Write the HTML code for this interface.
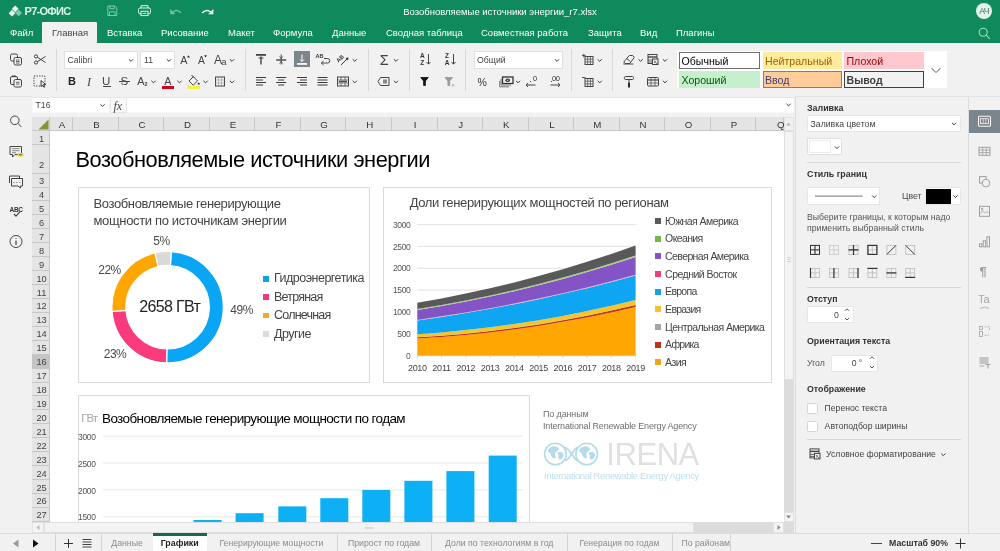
<!DOCTYPE html><html lang="ru"><head><meta charset="utf-8"><title>Р7-Офис</title><style>
*{box-sizing:border-box;margin:0;padding:0}
html,body{width:1000px;height:551px;overflow:hidden;background:#fff}
body{font-family:"Liberation Sans",sans-serif;font-size:11px;color:#444;position:relative;-webkit-font-smoothing:antialiased}
#root{position:absolute;left:0;top:0;width:1000px;height:551px;overflow:hidden;will-change:transform}
.a{position:absolute}
.t{position:absolute;white-space:nowrap;line-height:1}
svg{position:absolute;overflow:visible}
.hdr{left:0;top:0;width:1000px;height:44px;background:#0f8a5c}
.tab{color:#fff;font-size:11.5px;top:28px}
.tb{left:0;top:44px;width:1000px;height:52px;background:#f1f1f1}
.sep{width:1px;background:#d8d8d8;top:49px;height:42px}
.box{background:#fff;border:1px solid #e0e0e0;border-radius:1px}
.ch{font-family:"Liberation Sans",sans-serif;}
.rh{left:32px;width:18px;background:#e4e4e4;border-bottom:1px solid #c8c8c8;border-right:1px solid #c8c8c8;text-align:center;font-size:11px;color:#333;font-family:"Liberation Sans",sans-serif}
.colh{top:116px;height:15px;background:#e4e4e4;border-right:1px solid #c8c8c8;border-bottom:1px solid #c8c8c8;text-align:center;font-size:11px;line-height:15px;color:#333}
.lbl{font-weight:bold;color:#333;font-size:11px}
.st{font-size:11px;line-height:15px;padding-left:4px;height:17px;width:80px}
</style></head><body><div id="root">
<div class="a" style="left:0px;top:0px;width:1000px;height:43px;background:#0f8a5c;"></div>
<svg style="left:8px;top:4px" width="16" height="14" viewBox="8 4 16 14"><g fill="#e4f6ee"><rect x="12.800" y="6.400" width="4.800" height="4.800" transform="rotate(45 15.200 8.800)"/><rect x="9.600" y="10.800" width="4.800" height="4.800" transform="rotate(45 12 13.200)"/><rect x="16.200" y="10.500" width="4.800" height="4.800" transform="rotate(45 18.600 12.900)" opacity=".55"/></g></svg>
<div class="t" style="left:24.50px;top:6.4px;font-size:11px;color:#dff5ec;letter-spacing:-0.702px;font-weight:bold;">Р7-ОФИС</div>
<svg style="left:0;top:0" width="230" height="22" viewBox="0 0 230 22" fill="none" stroke-width="1"><g stroke="#7ccbab"><path d="M107.800 6h7.300l1.700 1.700v7.800h-9z"/><path d="M110 6v2.800h4.200v-2.800"/><path d="M109.500 15.500v-3.700h5.500v3.700"/></g><g stroke="#dff5ec"><rect x="138.500" y="8" width="12" height="5.800" rx="1.500"/><path d="M141 8v-2.300h7v2.300"/><rect x="141" y="11.300" width="7" height="4.300" fill="#0f8a5c"/><path d="M142.500 13.500h4" stroke-width=".8"/></g><g stroke="#6fc4a2" fill="#6fc4a2"><path d="M170.200 9v5.300h5.300z" stroke="none"/><path d="M173 12q4-3.500 8 .8" fill="none" stroke-width="1.500"/></g><g stroke="#f4fffa" fill="#f4fffa"><path d="M213.400 9v5.300h-5.300z" stroke="none"/><path d="M210.600 12q-4-3.500-8.500 1" fill="none" stroke-width="1.600"/></g></svg>
<div class="t" style="left:400px;width:200px;text-align:center;top:6.8px;font-size:9.5px;color:#fff;">Возобновляемые источники энергии_r7.xlsx</div>
<div class="a" style="left:976px;top:3px;width:16px;height:16px;border-radius:8px;background:#e3f3ec;color:#3a6f5a;font-size:8.500px;line-height:16.500px;text-align:center;letter-spacing:-0.600px">АЧ</div>
<svg style="left:978px;top:27px" width="13" height="13" viewBox="0 0 13 13" fill="none" stroke="#9fe0c6" stroke-width="1.1"><circle cx="5.2" cy="5.2" r="4"/><path d="M8.2 8.2l3.6 3.6"/></svg>
<div class="a" style="left:42px;top:22px;width:55px;height:23px;background:#f1f1f1;border-radius:1px 1px 0 0"></div>
<div class="t " style="left:10px;top:28.4px;font-size:9.5px;color:#fff;">Файл</div>
<div class="t " style="left:52px;top:28.4px;font-size:9.5px;color:#444;">Главная</div>
<div class="t " style="left:107px;top:28.4px;font-size:9.5px;color:#fff;">Вставка</div>
<div class="t " style="left:161px;top:28.4px;font-size:9.5px;color:#fff;">Рисование</div>
<div class="t " style="left:228px;top:28.4px;font-size:9.5px;color:#fff;">Макет</div>
<div class="t " style="left:273px;top:28.4px;font-size:9.5px;color:#fff;">Формула</div>
<div class="t " style="left:332px;top:28.4px;font-size:9.5px;color:#fff;">Данные</div>
<div class="t " style="left:386px;top:28.4px;font-size:9.5px;color:#fff;">Сводная таблица</div>
<div class="t " style="left:481px;top:28.4px;font-size:9.5px;color:#fff;">Совместная работа</div>
<div class="t " style="left:588px;top:28.4px;font-size:9.5px;color:#fff;">Защита</div>
<div class="t " style="left:640px;top:28.4px;font-size:9.5px;color:#fff;">Вид</div>
<div class="t " style="left:676px;top:28.4px;font-size:9.5px;color:#fff;">Плагины</div>
<div class="a" style="left:0px;top:43px;width:1000px;height:53px;background:#f1f1f1;"></div>
<div class="a" style="left:0px;top:96px;width:1000px;height:1px;background:#dedede;"></div>
<div class="a" style="left:56px;top:49px;width:1px;height:42px;background:#d8d8d8;"></div>
<div class="a" style="left:245px;top:49px;width:1px;height:42px;background:#d8d8d8;"></div>
<div class="a" style="left:368px;top:49px;width:1px;height:42px;background:#d8d8d8;"></div>
<div class="a" style="left:409px;top:49px;width:1px;height:42px;background:#d8d8d8;"></div>
<div class="a" style="left:465px;top:49px;width:1px;height:42px;background:#d8d8d8;"></div>
<div class="a" style="left:571px;top:49px;width:1px;height:42px;background:#d8d8d8;"></div>
<div class="a" style="left:612px;top:49px;width:1px;height:42px;background:#d8d8d8;"></div>
<svg style="left:6px;top:49px" width="21" height="21" viewBox="-10.00 -10.50 21 21" fill="none" stroke="#444" stroke-width="1"><rect x="-5.5" y="-5.5" width="7" height="7" rx="1.5"/><rect x="-2" y="-2" width="7.5" height="7.5" rx="1.5" fill="#f1f1f1"/><path d="M0 0.5h3.5M0 2h3.5M0 3.5h3.5" stroke-width=".8"/></svg>
<svg style="left:30px;top:49px" width="21" height="21" viewBox="-10.00 -10.50 21 21" fill="none" stroke="#444" stroke-width="1"><circle cx="-4" cy="-3" r="1.6"/><circle cx="-4" cy="3" r="1.6"/><path d="M-2.6 -2.2L5.5 3M-2.6 2.2L5.5 -3"/></svg>
<svg style="left:6px;top:71px" width="21" height="21" viewBox="-10.00 -10.50 21 21" fill="none" stroke="#444" stroke-width="1"><rect x="-5.5" y="-5" width="7" height="8" rx="1.5"/><path d="M-4 -5.2h4" stroke-width="1.6"/><rect x="-2" y="-2" width="7.5" height="7.5" rx="1.5" fill="#f1f1f1"/><path d="M0 0.8h3.5M0 2.6h3.5" stroke-width=".8"/></svg>
<svg style="left:30px;top:71px" width="21" height="21" viewBox="-10.00 -10.50 21 21" fill="none" stroke="#444" stroke-width="1"><rect x="-6" y="-5.5" width="11" height="10" stroke-dasharray="1.3 1.3"/><path d="M1 -1l0 6 1.6-1.6 1.2 2.4 1-.5-1.2-2.3 2.2 0z" fill="#f1f1f1"/></svg>
<div class="a box" style="left:64px;top:51px;width:74px;height:18px"></div>
<div class="t " style="left:67.5px;top:56.0px;font-size:8.7px;color:#444;">Calibri</div>
<svg style="left:126px;top:55px" width="11" height="11" viewBox="-5.00 -5.00 11 11" fill="none" stroke="#3a3a3a" stroke-width="1"><path d="M-2.1 -0.75 L0 1.35 L2.1 -0.75"/></svg>
<div class="a box" style="left:140px;top:51px;width:35px;height:18px"></div>
<div class="t " style="left:144px;top:56.0px;font-size:8.7px;color:#444;">11</div>
<svg style="left:164px;top:55px" width="11" height="11" viewBox="-5.00 -5.00 11 11" fill="none" stroke="#3a3a3a" stroke-width="1"><path d="M-2.1 -0.75 L0 1.35 L2.1 -0.75"/></svg>
<div class="t " style="left:180.3px;top:55.0px;font-size:10.8px;color:#444;">A</div>
<svg style="left:186.500px;top:54.500px" width="3" height="2.500" viewBox="0 0 4 3"><path d="M0 3L2 0L4 3z" fill="#333"/></svg>
<div class="t " style="left:198px;top:55.5px;font-size:10.3px;color:#444;">A</div>
<svg style="left:203.800px;top:55px" width="3" height="2.500" viewBox="0 0 4 3"><path d="M0 0L2 3L4 0z" fill="#333"/></svg>
<div class="t " style="left:214px;top:53.9px;font-size:12px;color:#444;">A</div>
<div class="t " style="left:221.3px;top:56.5px;font-size:9.5px;color:#444;">a</div>
<svg style="left:227px;top:55px" width="11" height="11" viewBox="-5.00 -5.00 11 11" fill="none" stroke="#3a3a3a" stroke-width="1"><path d="M-2.1 -0.75 L0 1.35 L2.1 -0.75"/></svg>
<div class="t " style="left:68px;top:76.1px;font-size:11px;color:#222;font-weight:bold">B</div>
<div class="t " style="left:87px;top:75.6px;font-size:12px;color:#444;font-family:'Liberation Serif',serif;font-style:italic">I</div>
<div class="t " style="left:102px;top:75.6px;font-size:11.5px;color:#444;">U</div>
<div class="a" style="left:102.5px;top:86.2px;width:8.5px;height:1px;background:#444;"></div>
<div class="t " style="left:120.5px;top:75.7px;font-size:11.5px;color:#444;">S</div>
<div class="a" style="left:118.5px;top:81px;width:11.5px;height:1px;background:#444;"></div>
<div class="t " style="left:137.3px;top:76.0px;font-size:10.8px;color:#444;">A</div>
<div class="t " style="left:144.5px;top:81.8px;font-size:5.5px;color:#444;font-weight:bold">2</div>
<svg style="left:148px;top:76px" width="11" height="11" viewBox="-5.50 -5.50 11 11" fill="none" stroke="#3a3a3a" stroke-width="1"><path d="M-2.1 -0.75 L0 1.35 L2.1 -0.75"/></svg>
<div class="t " style="left:164.2px;top:75.7px;font-size:10.8px;color:#444;">A</div>
<div class="a" style="left:162px;top:86.3px;width:11.5px;height:2.6px;background:#d0021b;"></div>
<svg style="left:174px;top:76px" width="11" height="11" viewBox="-5.50 -5.50 11 11" fill="none" stroke="#3a3a3a" stroke-width="1"><path d="M-2.1 -0.75 L0 1.35 L2.1 -0.75"/></svg>
<svg style="left:183px;top:70px" width="21" height="21" viewBox="-10.50 -10.50 21 21" fill="none" stroke="#444" stroke-width="1"><path d="M-4.500 0.500l4.300-4.300 4.200 4.200-4.300 4.300z"/><path d="M-2 -5.500l2.500 2.500"/><circle cx="5.200" cy="3.200" r="1" fill="#222" stroke="none"/></svg>
<div class="a" style="left:187px;top:86.3px;width:13px;height:2.6px;background:#f2f442;border-radius:1px"></div>
<svg style="left:200px;top:76px" width="11" height="11" viewBox="-5.50 -5.50 11 11" fill="none" stroke="#3a3a3a" stroke-width="1"><path d="M-2.1 -0.75 L0 1.35 L2.1 -0.75"/></svg>
<svg style="left:210px;top:71px" width="21" height="21" viewBox="-10.00 -10.50 21 21" fill="none" stroke="#444" stroke-width="1"><rect x="-4.500" y="-4.500" width="9" height="9"/><path d="M-4.500 -1.500h9M-4.500 1.500h9M-1.500 -4.500v9M1.500 -4.500v9" stroke-width=".5" stroke="#888"/></svg>
<svg style="left:227px;top:76px" width="11" height="11" viewBox="-5.00 -5.50 11 11" fill="none" stroke="#3a3a3a" stroke-width="1"><path d="M-2.1 -0.75 L0 1.35 L2.1 -0.75"/></svg>
<svg style="left:251px;top:49px" width="21" height="21" viewBox="-10.00 -10.50 21 21" fill="none" stroke="#444" stroke-width="1"><path d="M-5 -4.6h10" stroke-width="1.8"/><path d="M0 -3v8" stroke-width="1.4"/><path d="M-2.5 -1.5h5" stroke-width="1"/></svg>
<svg style="left:271px;top:49px" width="21" height="21" viewBox="-10.20 -10.50 21 21" fill="none" stroke="#444" stroke-width="1"><path d="M-5 0.5h10" stroke-width="1.4"/><path d="M0 -5v10"/><path d="M-1.6 -3l1.6 2 1.6-2M-1.6 4l1.6-2 1.6 2" stroke-width=".8"/></svg>
<div class="a" style="left:294px;top:51px;width:16px;height:16px;background:#7d858c;"></div>
<svg style="left:292px;top:49px" width="21" height="21" viewBox="-10.00 -10.50 21 21" fill="none" stroke="#444" stroke-width="1"><g stroke="#fff"><path d="M-5 4.4h10" stroke-width="1.8"/><path d="M0 -5v7"/><path d="M-2 0l2 2 2-2" stroke-width=".9"/></g></svg>
<div class="t " style="left:315.5px;top:53.8px;font-size:5.5px;color:#333;font-weight:bold">AB</div>
<svg style="left:313px;top:49px" width="21" height="21" viewBox="-10.00 -10.50 21 21" fill="none" stroke="#444" stroke-width="1"><path d="M1 -1h3.5a2 2 0 0 1 0 4.500h-6"/><path d="M0.5 1.5l-2.200 2 2.200 2" /></svg>
<svg style="left:333px;top:50px" width="20" height="20" viewBox="-10 -10 20 20"><text x="-6" y="1" font-size="5.5" font-weight="bold" fill="#333" transform="rotate(-45 -3 0)" font-family="Liberation Sans, sans-serif">AB</text><path d="M-2 5L5 -2" stroke="#333" fill="none"/><path d="M5.5 -2.500l-3 .5 2.500 2.500z" fill="#333"/></svg>
<svg style="left:349px;top:55px" width="11" height="11" viewBox="-5.75 -5.00 11 11" fill="none" stroke="#3a3a3a" stroke-width="1"><path d="M-2.1 -0.75 L0 1.35 L2.1 -0.75"/></svg>
<svg style="left:251px;top:71px" width="21" height="21" viewBox="-10.00 -10.50 21 21" fill="none" stroke="#3a3a3a" stroke-width="1"><path d="M-5 -4h10M-5 -1.500h7M-5 1h10M-5 3.500h7"/></svg>
<svg style="left:271px;top:71px" width="21" height="21" viewBox="-10.20 -10.50 21 21" fill="none" stroke="#3a3a3a" stroke-width="1"><path d="M-5 -4h10M-3 -1.500h6M-5 1h10M-3 3.500h6"/></svg>
<svg style="left:292px;top:71px" width="21" height="21" viewBox="-10.00 -10.50 21 21" fill="none" stroke="#3a3a3a" stroke-width="1"><path d="M-5 -4h10M-2 -1.500h7M-5 1h10M-2 3.500h7"/></svg>
<svg style="left:312px;top:71px" width="21" height="21" viewBox="-10.50 -10.50 21 21" fill="none" stroke="#3a3a3a" stroke-width="1"><path d="M-5 -4h10M-5 -1.500h10M-5 1h10M-5 3.500h10"/></svg>
<svg style="left:333px;top:71px" width="21" height="21" viewBox="-10.00 -10.50 21 21" fill="none" stroke="#444" stroke-width="1"><rect x="-5.500" y="-4.500" width="11" height="9"/><path d="M-5.500 -1.500h11M-5.500 1.500h11" stroke-width=".7"/><path d="M-2 -4.500v3M2 -4.500v3M-2 1.500v3M2 1.500v3" stroke-width=".7"/><path d="M-4 0h8" stroke-width="1.500"/></svg>
<svg style="left:349px;top:76px" width="11" height="11" viewBox="-5.75 -5.50 11 11" fill="none" stroke="#3a3a3a" stroke-width="1"><path d="M-2.1 -0.75 L0 1.35 L2.1 -0.75"/></svg>
<div class="t " style="left:379.7px;top:52.9px;font-size:14.5px;color:#444;">Σ</div>
<svg style="left:391px;top:55px" width="11" height="11" viewBox="-5.00 -5.00 11 11" fill="none" stroke="#3a3a3a" stroke-width="1"><path d="M-2.1 -0.75 L0 1.35 L2.1 -0.75"/></svg>
<svg style="left:374px;top:71px" width="21" height="21" viewBox="-10.00 -10.50 21 21" fill="none" stroke="#444" stroke-width="1"><path d="M-6 0l2.500-4h8.500v8h-8.500z"/><rect x="-1" y="-2" width="4" height="4" fill="#888" stroke="none"/></svg>
<svg style="left:391px;top:76px" width="11" height="11" viewBox="-5.00 -5.50 11 11" fill="none" stroke="#3a3a3a" stroke-width="1"><path d="M-2.1 -0.75 L0 1.35 L2.1 -0.75"/></svg>
<div class="t " style="left:420px;top:53.3px;font-size:6.5px;color:#333;font-weight:bold">A</div>
<div class="t " style="left:420.3px;top:60.3px;font-size:6.5px;color:#333;font-weight:bold">Z</div>
<svg style="left:418px;top:49px" width="21" height="21" viewBox="-10.50 -10.50 21 21" fill="none" stroke="#444" stroke-width="1"><path d="M0 -5.500v10M-2 2.500l2 2.200 2-2.200"/></svg>
<div class="t " style="left:445px;top:53.3px;font-size:6.5px;color:#333;font-weight:bold">Z</div>
<div class="t " style="left:444.7px;top:60.3px;font-size:6.5px;color:#333;font-weight:bold">A</div>
<svg style="left:443px;top:49px" width="21" height="21" viewBox="-10.50 -10.50 21 21" fill="none" stroke="#444" stroke-width="1"><path d="M0 -5.500v10M-2 2.500l2 2.200 2-2.200"/></svg>
<svg style="left:414px;top:71px" width="21" height="21" viewBox="-10.50 -10.50 21 21" fill="none" stroke="#444" stroke-width="1"><path d="M-3.800 -4h7.600l-2.900 3.500v4.500h-1.800v-4.500z" fill="#111" stroke="#111" stroke-width=".8"/></svg>
<svg style="left:438px;top:71px" width="21" height="21" viewBox="-10.80 -10.50 21 21" fill="none" stroke="#444" stroke-width="1"><path d="M-3.800 -4h7.600l-2.900 3.500v4.500h-1.800v-4.500z" fill="#999" stroke="#999" stroke-width=".8"/><path d="M3 2.500l2.500 2.500M5.500 2.500l-2.500 2.500" stroke="#aaa" stroke-width=".8"/></svg>
<div class="a box" style="left:474px;top:51px;width:89px;height:18px"></div>
<div class="t " style="left:477px;top:56.0px;font-size:8.7px;color:#444;">Общий</div>
<svg style="left:552px;top:55px" width="11" height="11" viewBox="-5.00 -5.00 11 11" fill="none" stroke="#3a3a3a" stroke-width="1"><path d="M-2.1 -0.75 L0 1.35 L2.1 -0.75"/></svg>
<div class="t " style="left:477.5px;top:76.5px;font-size:10.5px;color:#333;">%</div>
<svg style="left:496px;top:71px" width="21" height="21" viewBox="-10.50 -10.50 21 21" fill="none" stroke="#444" stroke-width="1"><rect x="-4" y="-4.500" width="10.500" height="6.500" stroke-width="1.300" stroke="#333"/><ellipse cx="1.200" cy="-1.200" rx="2.300" ry="1.700" fill="#333" stroke="none"/><circle cx="1.200" cy="-1.200" r=".7" fill="#f1f1f1" stroke="none"/><path d="M-5.500 -2.500v6h10M-6.800 -0.500v5.800h9.500" stroke-width=".8" stroke="#555"/></svg>
<svg style="left:513px;top:76px" width="11" height="11" viewBox="-5.00 -5.50 11 11" fill="none" stroke="#3a3a3a" stroke-width="1"><path d="M-2.1 -0.75 L0 1.35 L2.1 -0.75"/></svg>
<div class="t " style="left:533px;top:74.8px;font-size:7.5px;color:#333;">0</div>
<svg style="left:521px;top:71px" width="21" height="21" viewBox="-10.00 -10.50 21 21" fill="none" stroke="#444" stroke-width="1"><path d="M-5 3.500h9.500M-3 1.500l-2 2 2 2"/><path d="M-1 0h1" /></svg>
<div class="t " style="left:552px;top:74.8px;font-size:7.5px;color:#333;letter-spacing:-0.3px">00</div>
<svg style="left:545px;top:71px" width="21" height="21" viewBox="-10.50 -10.50 21 21" fill="none" stroke="#444" stroke-width="1"><path d="M-5 3.500h9.500M2.500 1.500l2 2-2 2"/><path d="M-4.500 0h1" /></svg>
<svg style="left:579px;top:50px" width="21" height="21" viewBox="-10.00 -10.00 21 21" fill="none" stroke="#444" stroke-width="1"><rect x="-4" y="-3.500" width="8" height="8"/><path d="M-4 -.8h8M-4 1.900h8M-1.300 -3.500v8M1.400 -3.500v8" stroke-width=".7"/><path d="M-7 -4.500h3.500M-5.200 -6.200v3.500" stroke-width=".9"/></svg>
<svg style="left:594px;top:55px" width="11" height="11" viewBox="-5.75 -5.00 11 11" fill="none" stroke="#3a3a3a" stroke-width="1"><path d="M-2.1 -0.75 L0 1.35 L2.1 -0.75"/></svg>
<svg style="left:579px;top:72px" width="21" height="21" viewBox="-10.00 -10.00 21 21" fill="none" stroke="#444" stroke-width="1"><rect x="-4" y="-3.500" width="8" height="8"/><path d="M-4 -.8h8M-4 1.900h8M-1.300 -3.500v8M1.400 -3.500v8" stroke-width=".7"/><path d="M-7 -4.500h3.500" stroke-width=".9"/></svg>
<svg style="left:594px;top:76px" width="11" height="11" viewBox="-5.75 -5.50 11 11" fill="none" stroke="#3a3a3a" stroke-width="1"><path d="M-2.1 -0.75 L0 1.35 L2.1 -0.75"/></svg>
<svg style="left:618px;top:49px" width="21" height="21" viewBox="-10.75 -10.50 21 21" fill="none" stroke="#444" stroke-width="1"><path d="M-5 2.500l5.500-6.500h3.500l1.500 2-4.500 6h-4.500z" fill="#f1f1f1"/><path d="M-2 -1l3.500 3"/><path d="M-5.500 4.500h10"/></svg>
<svg style="left:635px;top:55px" width="11" height="11" viewBox="-5.60 -5.00 11 11" fill="none" stroke="#3a3a3a" stroke-width="1"><path d="M-2.1 -0.75 L0 1.35 L2.1 -0.75"/></svg>
<svg style="left:643px;top:49px" width="21" height="21" viewBox="-10.00 -10.50 21 21" fill="none" stroke="#444" stroke-width="1"><rect x="-5" y="-5" width="9" height="9"/><path d="M-5 -2.500h9" stroke-width="1.400"/><path d="M-5 .5h4M-5 2.500h4" stroke-width=".8"/><rect x="-0.500" y="-0.500" width="5.500" height="5.500" fill="#f1f1f1"/><path d="M1 1.300l2 1-2 1M3 3.800h1.500" stroke-width=".7"/></svg>
<svg style="left:660px;top:55px" width="11" height="11" viewBox="-5.00 -5.00 11 11" fill="none" stroke="#3a3a3a" stroke-width="1"><path d="M-2.1 -0.75 L0 1.35 L2.1 -0.75"/></svg>
<svg style="left:619px;top:71px" width="21" height="21" viewBox="-10.00 -10.50 21 21" fill="none" stroke="#444" stroke-width="1"><rect x="-4.500" y="-5" width="9" height="3" rx="1"/><path d="M0 -2v3"/><path d="M0 1v5" stroke-width="1.800" stroke="#111"/><path d="M-4.500 -3.500h-.8" /></svg>
<svg style="left:643px;top:71px" width="21" height="21" viewBox="-10.00 -10.50 21 21" fill="none" stroke="#444" stroke-width="1"><rect x="-5.500" y="-4" width="11" height="8.500" rx="1"/><path d="M-5.500 -1.500h11" stroke-width="1.200"/><path d="M-5.500 1.500h11M-2 -4v8.500M2 -4v8.500" stroke-width=".7"/></svg>
<svg style="left:660px;top:76px" width="11" height="11" viewBox="-5.00 -5.50 11 11" fill="none" stroke="#3a3a3a" stroke-width="1"><path d="M-2.1 -0.75 L0 1.35 L2.1 -0.75"/></svg>
<div class="a" style="left:677.3px;top:51.2px;width:269.7px;height:37.3px;background:#fff;"></div>
<div class="a" style="left:679px;top:52.2px;width:80.8px;height:17px;background:#fff;color:#000;border:1px solid #6f6f6f;font-size:10.600px;line-height:16px;padding-left:1.5px;white-space:nowrap;overflow:hidden">Обычный</div>
<div class="a" style="left:762.5px;top:52.2px;width:79px;height:17px;background:#ffeb9c;color:#9c6500;font-size:10.600px;line-height:18px;padding-left:2.5px;white-space:nowrap;overflow:hidden">Нейтральный</div>
<div class="a" style="left:844px;top:52.2px;width:79.5px;height:17px;background:#ffc7ce;color:#9c0006;font-size:10.600px;line-height:18px;padding-left:2.5px;white-space:nowrap;overflow:hidden">Плохой</div>
<div class="a" style="left:679px;top:71px;width:80.8px;height:17px;background:#c6efce;color:#006100;font-size:10.600px;line-height:18px;padding-left:2.5px;white-space:nowrap;overflow:hidden">Хороший</div>
<div class="a" style="left:762.5px;top:71px;width:79px;height:17px;background:#ffcc99;color:#3f3f76;border:1px solid #7f7f7f;font-size:10.600px;line-height:16px;padding-left:1.5px;white-space:nowrap;overflow:hidden">Ввод</div>
<div class="a" style="left:844px;top:71px;width:79.5px;height:17px;background:#f2f2f2;color:#3f3f3f;border:1px solid #3f3f3f;font-weight:bold;font-size:10.600px;line-height:16px;padding-left:1.5px;white-space:nowrap;overflow:hidden">Вывод</div>
<svg style="left:931px;top:65px" width="11" height="11" viewBox="-5.00 -5.00 11 11" fill="none" stroke="#555" stroke-width="1"><path d="M-4.5 -1.95 L0 2.55 L4.5 -1.95"/></svg>
<div class="a" style="left:0px;top:96px;width:32px;height:438px;background:#f1f1f1;"></div>
<svg style="left:6px;top:111px" width="21" height="21" viewBox="-10.00 -10.50 21 21" fill="none" stroke="#444" stroke-width="1"><circle cx="-1.200" cy="-1.200" r="4.300"/><path d="M2 2l3.500 3.500"/></svg>
<svg style="left:6px;top:142px" width="21" height="21" viewBox="-10.00 -10.00 21 21" fill="none" stroke="#444" stroke-width="1"><path d="M-6 -5.500h11.500v8h-6.500l-2.500 2.500v-2.500h-2.500z"/><path d="M-4 -3.300h7.500M-4 -1.300h7.500M-4 0.700h4" stroke-width=".6"/><rect x="1.500" y="1" width="6" height="3.500" fill="#f5d33c" stroke="none"/><path d="M3 2.800h3" stroke="#444" stroke-width=".8"/></svg>
<svg style="left:6px;top:171px" width="21" height="21" viewBox="-10.00 -10.50 21 21" fill="none" stroke="#444" stroke-width="1"><path d="M-6.500 -5.500h10v2"/><path d="M-6.500 -5.500v7"/><path d="M-4.500 -3h11v7.500h-2v2l-2.500-2h-6.500z"/><path d="M-2.500 1h.8M0.500 1h.8M3.500 1h.8" stroke-width="1.200"/></svg>
<div class="t" style="left:9.5px;top:207px;font-size:6.500px;font-weight:bold;color:#333;letter-spacing:-0.300px">ABC</div>
<svg style="left:6px;top:201px" width="21" height="21" viewBox="-10.00 -10.00 21 21" fill="none" stroke="#444" stroke-width="1"><path d="M-2 3l2 2.200 4-4.500" stroke-width="1.200"/></svg>
<svg style="left:6px;top:231px" width="21" height="21" viewBox="-10.00 -10.50 21 21" fill="none" stroke="#444" stroke-width="1"><circle cx="0" cy="0" r="6"/><path d="M0 -1v4.500M0 -3.200v.8" stroke-width="1.200"/></svg>
<div class="a" style="left:32px;top:96px;width:764px;height:20px;background:#f1f1f1;"></div>
<div class="a" style="left:32px;top:97px;width:78px;height:16px;background:#fff;border:1px solid #f8f8f8;border-top-color:#e4e4e4"></div>
<div class="t " style="left:35.5px;top:101.0px;font-size:8.7px;color:#444;">T16</div>
<svg style="left:97px;top:100px" width="11" height="11" viewBox="-5.50 -5.00 11 11" fill="none" stroke="#3a3a3a" stroke-width="1"><path d="M-2.1 -0.75 L0 1.35 L2.1 -0.75"/></svg>
<div class="a" style="left:110px;top:97px;width:17px;height:16px;background:#f9f9f9;border:1px solid #e6e6e6"></div>
<div class="t " style="left:113.5px;top:99.6px;font-size:11px;color:#444;font-family:'Liberation Serif',serif;font-style:italic;font-size:12px"><i>f</i>x</div>
<div class="a" style="left:127px;top:97px;width:667px;height:16px;background:#fff;border:1px solid #f8f8f8;border-top-color:#e4e4e4;border-left:none"></div>
<svg style="left:783px;top:99px" width="11" height="11" viewBox="-5.50 -5.50 11 11" fill="none" stroke="#3a3a3a" stroke-width="1"><path d="M-2.1 -0.75 L0 1.35 L2.1 -0.75"/></svg>
<div class="a" style="left:32px;top:116px;width:764px;height:418px;background:#f1f1f1;"></div>
<div class="a" style="left:50px;top:131px;width:734px;height:391px;background:#fff;"></div>
<div class="a" style="left:32px;top:116.500px;width:18px;height:14.500px;background:#e4e4e4;border-right:1px solid #c8c8c8;border-bottom:1px solid #c8c8c8"></div>
<svg style="left:38px;top:119px" width="11" height="11" viewBox="0 0 11 11"><path d="M10.500 0.500v10h-10z" fill="#7d9636"/></svg>
<div class="a" style="left:50px;top:116.5px;width:734px;height:14.5px;background:#e4e4e4;border-bottom:1px solid #c8c8c8"></div>
<div class="a" style="left:50.00px;top:116.500px;width:23.20px;height:14.500px;border-right:1px solid #c6c6c6;"></div>
<div class="t" style="left:52.00px;width:20px;text-align:center;top:120px;font-size:9.700px;color:#333">A</div>
<div class="a" style="left:73.20px;top:116.500px;width:45.55px;height:14.500px;border-right:1px solid #c6c6c6;"></div>
<div class="t" style="left:86.38px;width:20px;text-align:center;top:120px;font-size:9.700px;color:#333">B</div>
<div class="a" style="left:118.75px;top:116.500px;width:45.55px;height:14.500px;border-right:1px solid #c6c6c6;"></div>
<div class="t" style="left:131.93px;width:20px;text-align:center;top:120px;font-size:9.700px;color:#333">C</div>
<div class="a" style="left:164.30px;top:116.500px;width:45.55px;height:14.500px;border-right:1px solid #c6c6c6;"></div>
<div class="t" style="left:177.48px;width:20px;text-align:center;top:120px;font-size:9.700px;color:#333">D</div>
<div class="a" style="left:209.85px;top:116.500px;width:45.55px;height:14.500px;border-right:1px solid #c6c6c6;"></div>
<div class="t" style="left:223.03px;width:20px;text-align:center;top:120px;font-size:9.700px;color:#333">E</div>
<div class="a" style="left:255.40px;top:116.500px;width:45.55px;height:14.500px;border-right:1px solid #c6c6c6;"></div>
<div class="t" style="left:268.57px;width:20px;text-align:center;top:120px;font-size:9.700px;color:#333">F</div>
<div class="a" style="left:300.95px;top:116.500px;width:45.55px;height:14.500px;border-right:1px solid #c6c6c6;"></div>
<div class="t" style="left:314.12px;width:20px;text-align:center;top:120px;font-size:9.700px;color:#333">G</div>
<div class="a" style="left:346.50px;top:116.500px;width:45.55px;height:14.500px;border-right:1px solid #c6c6c6;"></div>
<div class="t" style="left:359.68px;width:20px;text-align:center;top:120px;font-size:9.700px;color:#333">H</div>
<div class="a" style="left:392.05px;top:116.500px;width:45.55px;height:14.500px;border-right:1px solid #c6c6c6;"></div>
<div class="t" style="left:405.23px;width:20px;text-align:center;top:120px;font-size:9.700px;color:#333">I</div>
<div class="a" style="left:437.60px;top:116.500px;width:45.55px;height:14.500px;border-right:1px solid #c6c6c6;"></div>
<div class="t" style="left:450.78px;width:20px;text-align:center;top:120px;font-size:9.700px;color:#333">J</div>
<div class="a" style="left:483.15px;top:116.500px;width:45.55px;height:14.500px;border-right:1px solid #c6c6c6;"></div>
<div class="t" style="left:496.33px;width:20px;text-align:center;top:120px;font-size:9.700px;color:#333">K</div>
<div class="a" style="left:528.70px;top:116.500px;width:45.55px;height:14.500px;border-right:1px solid #c6c6c6;"></div>
<div class="t" style="left:541.88px;width:20px;text-align:center;top:120px;font-size:9.700px;color:#333">L</div>
<div class="a" style="left:574.25px;top:116.500px;width:45.55px;height:14.500px;border-right:1px solid #c6c6c6;"></div>
<div class="t" style="left:587.42px;width:20px;text-align:center;top:120px;font-size:9.700px;color:#333">M</div>
<div class="a" style="left:619.80px;top:116.500px;width:45.55px;height:14.500px;border-right:1px solid #c6c6c6;"></div>
<div class="t" style="left:632.97px;width:20px;text-align:center;top:120px;font-size:9.700px;color:#333">N</div>
<div class="a" style="left:665.35px;top:116.500px;width:45.55px;height:14.500px;border-right:1px solid #c6c6c6;"></div>
<div class="t" style="left:678.52px;width:20px;text-align:center;top:120px;font-size:9.700px;color:#333">O</div>
<div class="a" style="left:710.90px;top:116.500px;width:45.55px;height:14.500px;border-right:1px solid #c6c6c6;"></div>
<div class="t" style="left:724.07px;width:20px;text-align:center;top:120px;font-size:9.700px;color:#333">P</div>
<div class="a" style="left:756.45px;top:116.500px;width:27.55px;height:14.500px;border-right:1px solid #c6c6c6;"></div>
<div class="t" style="left:770.70px;width:20px;text-align:center;top:120px;font-size:9.700px;color:#333">Q</div>
<div class="a" style="left:32px;top:131.00px;width:18px;height:14.30px;background:#e4e4e4;border-right:1px solid #c6c6c6;border-bottom:1px solid #c6c6c6"></div>
<div class="t" style="left:31.600px;width:20px;text-align:center;top:134.65px;font-size:9.300px;color:#444">1</div>
<div class="a" style="left:32px;top:145.30px;width:18px;height:28.30px;background:#e4e4e4;border-right:1px solid #c6c6c6;border-bottom:1px solid #c6c6c6"></div>
<div class="t" style="left:31.600px;width:20px;text-align:center;top:160.60px;font-size:9.300px;color:#444">2</div>
<div class="a" style="left:32px;top:173.60px;width:18px;height:13.93px;background:#e4e4e4;border-right:1px solid #c6c6c6;border-bottom:1px solid #c6c6c6"></div>
<div class="t" style="left:31.600px;width:20px;text-align:center;top:177.06px;font-size:9.300px;color:#444">3</div>
<div class="a" style="left:32px;top:187.53px;width:18px;height:13.93px;background:#e4e4e4;border-right:1px solid #c6c6c6;border-bottom:1px solid #c6c6c6"></div>
<div class="t" style="left:31.600px;width:20px;text-align:center;top:191.00px;font-size:9.300px;color:#444">4</div>
<div class="a" style="left:32px;top:201.46px;width:18px;height:13.93px;background:#e4e4e4;border-right:1px solid #c6c6c6;border-bottom:1px solid #c6c6c6"></div>
<div class="t" style="left:31.600px;width:20px;text-align:center;top:204.93px;font-size:9.300px;color:#444">5</div>
<div class="a" style="left:32px;top:215.39px;width:18px;height:13.93px;background:#e4e4e4;border-right:1px solid #c6c6c6;border-bottom:1px solid #c6c6c6"></div>
<div class="t" style="left:31.600px;width:20px;text-align:center;top:218.86px;font-size:9.300px;color:#444">6</div>
<div class="a" style="left:32px;top:229.32px;width:18px;height:13.93px;background:#e4e4e4;border-right:1px solid #c6c6c6;border-bottom:1px solid #c6c6c6"></div>
<div class="t" style="left:31.600px;width:20px;text-align:center;top:232.79px;font-size:9.300px;color:#444">7</div>
<div class="a" style="left:32px;top:243.25px;width:18px;height:13.93px;background:#e4e4e4;border-right:1px solid #c6c6c6;border-bottom:1px solid #c6c6c6"></div>
<div class="t" style="left:31.600px;width:20px;text-align:center;top:246.72px;font-size:9.300px;color:#444">8</div>
<div class="a" style="left:32px;top:257.18px;width:18px;height:13.93px;background:#e4e4e4;border-right:1px solid #c6c6c6;border-bottom:1px solid #c6c6c6"></div>
<div class="t" style="left:31.600px;width:20px;text-align:center;top:260.64px;font-size:9.300px;color:#444">9</div>
<div class="a" style="left:32px;top:271.11px;width:18px;height:13.93px;background:#e4e4e4;border-right:1px solid #c6c6c6;border-bottom:1px solid #c6c6c6"></div>
<div class="t" style="left:31.600px;width:20px;text-align:center;top:274.57px;font-size:9.300px;color:#444">10</div>
<div class="a" style="left:32px;top:285.04px;width:18px;height:13.93px;background:#e4e4e4;border-right:1px solid #c6c6c6;border-bottom:1px solid #c6c6c6"></div>
<div class="t" style="left:31.600px;width:20px;text-align:center;top:288.50px;font-size:9.300px;color:#444">11</div>
<div class="a" style="left:32px;top:298.97px;width:18px;height:13.93px;background:#e4e4e4;border-right:1px solid #c6c6c6;border-bottom:1px solid #c6c6c6"></div>
<div class="t" style="left:31.600px;width:20px;text-align:center;top:302.44px;font-size:9.300px;color:#444">12</div>
<div class="a" style="left:32px;top:312.90px;width:18px;height:13.93px;background:#e4e4e4;border-right:1px solid #c6c6c6;border-bottom:1px solid #c6c6c6"></div>
<div class="t" style="left:31.600px;width:20px;text-align:center;top:316.37px;font-size:9.300px;color:#444">13</div>
<div class="a" style="left:32px;top:326.83px;width:18px;height:13.93px;background:#e4e4e4;border-right:1px solid #c6c6c6;border-bottom:1px solid #c6c6c6"></div>
<div class="t" style="left:31.600px;width:20px;text-align:center;top:330.30px;font-size:9.300px;color:#444">14</div>
<div class="a" style="left:32px;top:340.76px;width:18px;height:13.93px;background:#e4e4e4;border-right:1px solid #c6c6c6;border-bottom:1px solid #c6c6c6"></div>
<div class="t" style="left:31.600px;width:20px;text-align:center;top:344.23px;font-size:9.300px;color:#444">15</div>
<div class="a" style="left:32px;top:354.69px;width:18px;height:13.93px;background:#c4c4c4;border-right:1px solid #c6c6c6;border-bottom:1px solid #c6c6c6"></div>
<div class="t" style="left:31.600px;width:20px;text-align:center;top:358.16px;font-size:9.300px;color:#444">16</div>
<div class="a" style="left:32px;top:368.62px;width:18px;height:13.93px;background:#e4e4e4;border-right:1px solid #c6c6c6;border-bottom:1px solid #c6c6c6"></div>
<div class="t" style="left:31.600px;width:20px;text-align:center;top:372.09px;font-size:9.300px;color:#444">17</div>
<div class="a" style="left:32px;top:382.55px;width:18px;height:13.93px;background:#e4e4e4;border-right:1px solid #c6c6c6;border-bottom:1px solid #c6c6c6"></div>
<div class="t" style="left:31.600px;width:20px;text-align:center;top:386.02px;font-size:9.300px;color:#444">18</div>
<div class="a" style="left:32px;top:396.48px;width:18px;height:13.93px;background:#e4e4e4;border-right:1px solid #c6c6c6;border-bottom:1px solid #c6c6c6"></div>
<div class="t" style="left:31.600px;width:20px;text-align:center;top:399.95px;font-size:9.300px;color:#444">19</div>
<div class="a" style="left:32px;top:410.41px;width:18px;height:13.93px;background:#e4e4e4;border-right:1px solid #c6c6c6;border-bottom:1px solid #c6c6c6"></div>
<div class="t" style="left:31.600px;width:20px;text-align:center;top:413.88px;font-size:9.300px;color:#444">20</div>
<div class="a" style="left:32px;top:424.34px;width:18px;height:13.93px;background:#e4e4e4;border-right:1px solid #c6c6c6;border-bottom:1px solid #c6c6c6"></div>
<div class="t" style="left:31.600px;width:20px;text-align:center;top:427.81px;font-size:9.300px;color:#444">21</div>
<div class="a" style="left:32px;top:438.27px;width:18px;height:13.93px;background:#e4e4e4;border-right:1px solid #c6c6c6;border-bottom:1px solid #c6c6c6"></div>
<div class="t" style="left:31.600px;width:20px;text-align:center;top:441.74px;font-size:9.300px;color:#444">22</div>
<div class="a" style="left:32px;top:452.20px;width:18px;height:13.93px;background:#e4e4e4;border-right:1px solid #c6c6c6;border-bottom:1px solid #c6c6c6"></div>
<div class="t" style="left:31.600px;width:20px;text-align:center;top:455.67px;font-size:9.300px;color:#444">23</div>
<div class="a" style="left:32px;top:466.13px;width:18px;height:13.93px;background:#e4e4e4;border-right:1px solid #c6c6c6;border-bottom:1px solid #c6c6c6"></div>
<div class="t" style="left:31.600px;width:20px;text-align:center;top:469.60px;font-size:9.300px;color:#444">24</div>
<div class="a" style="left:32px;top:480.06px;width:18px;height:13.93px;background:#e4e4e4;border-right:1px solid #c6c6c6;border-bottom:1px solid #c6c6c6"></div>
<div class="t" style="left:31.600px;width:20px;text-align:center;top:483.53px;font-size:9.300px;color:#444">25</div>
<div class="a" style="left:32px;top:493.99px;width:18px;height:13.93px;background:#e4e4e4;border-right:1px solid #c6c6c6;border-bottom:1px solid #c6c6c6"></div>
<div class="t" style="left:31.600px;width:20px;text-align:center;top:497.46px;font-size:9.300px;color:#444">26</div>
<div class="a" style="left:32px;top:507.92px;width:18px;height:13.93px;background:#e4e4e4;border-right:1px solid #c6c6c6;border-bottom:1px solid #c6c6c6"></div>
<div class="t" style="left:31.600px;width:20px;text-align:center;top:511.39px;font-size:9.300px;color:#444">27</div>
<div class="a" style="left:32px;top:521.85px;width:18px;height:0.15px;background:#e4e4e4;border-right:1px solid #c6c6c6;border-bottom:1px solid #c6c6c6"></div>
<div class="a" style="left:784px;top:116.5px;width:12px;height:417px;background:#f1f1f1;"></div>
<div class="a" style="left:784px;top:131px;width:9.5px;height:391px;background:#dcdcdc;"></div>
<div class="a" style="left:784px;top:117px;width:9.500px;height:14px;background:#f1f1f1;border:1px solid #e2e2e2"></div>
<svg style="left:786px;top:122px" width="5" height="4" viewBox="0 0 5 4"><path d="M0 3.500L2.500 0.500L5 3.500z" fill="#b5b5b5"/></svg>
<div class="a" style="left:784px;top:512px;width:9.500px;height:10px;background:#f4f4f4;border:1px solid #e2e2e2"></div>
<svg style="left:786px;top:515px" width="5" height="4" viewBox="0 0 5 4"><path d="M0 0.500L2.500 3.500L5 0.500z" fill="#8a8a8a"/></svg>
<div class="a" style="left:784px;top:131px;width:9.5px;height:249px;background:#f3f3f3;border:1px solid #dfdfdf"></div>
<div class="a" style="left:786.5px;top:257px;width:4.5px;height:1px;background:#d4d4d4;"></div>
<div class="a" style="left:786.5px;top:259px;width:4.5px;height:1px;background:#d4d4d4;"></div>
<div class="a" style="left:786.5px;top:261px;width:4.5px;height:1px;background:#d4d4d4;"></div>
<div class="a" style="left:32px;top:522px;width:764px;height:11.5px;background:#f1f1f1;"></div>
<div class="a" style="left:32px;top:522px;width:761.5px;height:11px;background:#dcdcdc;"></div>
<div class="a" style="left:32px;top:522px;width:12px;height:11px;background:#f4f4f4;border:1px solid #e2e2e2"></div>
<svg style="left:36px;top:525px" width="4" height="5" viewBox="0 0 4 5"><path d="M3.500 0L0.500 2.500L3.500 5z" fill="#b5b5b5"/></svg>
<div class="a" style="left:773px;top:522px;width:11px;height:11px;background:#f4f4f4;border:1px solid #e2e2e2"></div>
<svg style="left:776.500px;top:525px" width="4" height="5" viewBox="0 0 4 5"><path d="M0.500 0L3.500 2.500L0.500 5z" fill="#8a8a8a"/></svg>
<div class="a" style="left:44px;top:522px;width:650px;height:11px;background:#f3f3f3;border:1px solid #dfdfdf"></div>
<div class="a" style="left:365px;top:526.5px;width:8px;height:2px;background:#dadada;"></div>
<div class="t" style="left:75.50px;top:149.3px;font-size:21.8px;color:#000;letter-spacing:-0.454px;">Возобновляемые источники энергии</div>
<div class="a" style="left:78px;top:187px;width:292px;height:195.500px;border:1px solid #d9d9d9;background:#fff"></div>
<div class="t" style="left:93.50px;top:197.1px;font-size:13px;color:#444;letter-spacing:-0.383px;">Возобновляемые генерирующие</div>
<div class="t" style="left:93.50px;top:213.6px;font-size:13px;color:#444;letter-spacing:-0.350px;">мощности по источникам энергии</div>
<svg style="left:0;top:0" width="1000" height="551" viewBox="0 0 1000 551"><path d="M171.29 251.62A55.7 55.7 0 0 1 166.63 362.89L166.87 348.99A41.8 41.8 0 0 0 170.37 265.49Z" fill="#0aa5f5" stroke="#fff" stroke-width="1.200"/><path d="M166.63 362.89A55.7 55.7 0 0 1 112.06 311.38L125.92 310.33A41.8 41.8 0 0 0 166.87 348.99Z" fill="#f93a7c" stroke="#fff" stroke-width="1.200"/><path d="M112.06 311.38A55.7 55.7 0 0 1 155.07 252.93L158.20 266.47A41.8 41.8 0 0 0 125.92 310.33Z" fill="#ffa600" stroke="#fff" stroke-width="1.200"/><path d="M155.07 252.93A55.7 55.7 0 0 1 171.29 251.62L170.37 265.49A41.8 41.8 0 0 0 158.20 266.47Z" fill="#d9d9d9" stroke="#fff" stroke-width="1.200"/></svg>
<div class="t" style="left:153.25px;top:235.1px;font-size:12px;color:#4a4a4a;letter-spacing:-0.422px;">5%</div>
<div class="t" style="left:98.25px;top:263.6px;font-size:12px;color:#4a4a4a;letter-spacing:-0.506px;">22%</div>
<div class="t" style="left:103.75px;top:348.4px;font-size:12px;color:#4a4a4a;letter-spacing:-0.506px;">23%</div>
<div class="t" style="left:230.35px;top:303.6px;font-size:12px;color:#4a4a4a;letter-spacing:-0.506px;">49%</div>
<div class="t" style="left:139.20px;top:299.2px;font-size:16px;color:#222;letter-spacing:-0.647px;">2658 ГВт</div>
<div class="a" style="left:263.2px;top:275.8px;width:5.8px;height:5.8px;background:#0aa0ee;"></div>
<div class="t" style="left:274.00px;top:272.3px;font-size:12.5px;color:#444;letter-spacing:-0.511px;">Гидроэнергетика</div>
<div class="a" style="left:263.2px;top:294.23px;width:5.8px;height:5.8px;background:#ee3a7c;"></div>
<div class="t" style="left:274.00px;top:290.7px;font-size:12.5px;color:#444;letter-spacing:-0.788px;">Ветряная</div>
<div class="a" style="left:263.2px;top:312.66px;width:5.8px;height:5.8px;background:#f7a823;"></div>
<div class="t" style="left:274.00px;top:309.1px;font-size:12.5px;color:#444;letter-spacing:-0.786px;">Солнечная</div>
<div class="a" style="left:263.2px;top:331.09px;width:5.8px;height:5.8px;background:#d9d9d9;"></div>
<div class="t" style="left:274.00px;top:327.6px;font-size:12.5px;color:#444;letter-spacing:-0.504px;">Другие</div>
<div class="a" style="left:383px;top:187px;width:389px;height:195.500px;border:1px solid #d9d9d9;background:#fff"></div>
<div class="t" style="left:409.70px;top:195.6px;font-size:13px;color:#444;letter-spacing:-0.358px;">Доли генерирующих мощностей по регионам</div>
<svg style="left:0;top:0" width="1000" height="551" viewBox="0 0 1000 551"><path d="M417.3 355.60H635.6" stroke="#d9d9d9" stroke-width="0.800"/><path d="M417.3 333.77H635.6" stroke="#d9d9d9" stroke-width="0.800"/><path d="M417.3 311.93H635.6" stroke="#d9d9d9" stroke-width="0.800"/><path d="M417.3 290.10H635.6" stroke="#d9d9d9" stroke-width="0.800"/><path d="M417.3 268.27H635.6" stroke="#d9d9d9" stroke-width="0.800"/><path d="M417.3 246.43H635.6" stroke="#d9d9d9" stroke-width="0.800"/><path d="M417.3 224.60H635.6" stroke="#d9d9d9" stroke-width="0.800"/><path d="M417.30 338.57L441.56 337.01L465.81 334.97L490.07 332.43L514.32 329.40L538.58 325.88L562.83 321.87L587.09 317.38L611.34 312.39L635.60 306.91L635.60 355.60L611.34 355.60L587.09 355.60L562.83 355.60L538.58 355.60L514.32 355.60L490.07 355.60L465.81 355.60L441.56 355.60L417.30 355.60Z" fill="#ffa600"/><path d="M417.30 337.35L441.56 335.77L465.81 333.69L490.07 331.10L514.32 328.00L538.58 324.40L562.83 320.30L587.09 315.69L611.34 310.57L635.60 304.95L635.60 306.91L611.34 312.39L587.09 317.38L562.83 321.87L538.58 325.88L514.32 329.40L490.07 332.43L465.81 334.97L441.56 337.01L417.30 338.57Z" fill="#c8321c"/><path d="M417.30 337.17L441.56 335.58L465.81 333.48L490.07 330.88L514.32 327.78L538.58 324.18L562.83 320.08L587.09 315.48L611.34 310.38L635.60 304.77L635.60 304.95L611.34 310.57L587.09 315.69L562.83 320.30L538.58 324.40L514.32 328.00L490.07 331.10L465.81 333.69L441.56 335.77L417.30 337.35Z" fill="#a5a5a5"/><path d="M417.30 334.20L441.56 332.40L465.81 330.09L490.07 327.29L514.32 323.99L538.58 320.19L562.83 315.89L587.09 311.09L611.34 305.80L635.60 300.01L635.60 304.77L611.34 310.38L587.09 315.48L562.83 320.08L538.58 324.18L514.32 327.78L490.07 330.88L465.81 333.48L441.56 335.58L417.30 337.17Z" fill="#f6c528"/><path d="M417.30 320.40L441.56 316.89L465.81 313.02L490.07 308.77L514.32 304.16L538.58 299.18L562.83 293.84L587.09 288.13L611.34 282.05L635.60 275.60L635.60 300.01L611.34 305.80L587.09 311.09L562.83 315.89L538.58 320.19L514.32 323.99L490.07 327.29L465.81 330.09L441.56 332.40L417.30 334.20Z" fill="#0ea5f2"/><path d="M417.30 319.88L441.56 316.35L465.81 312.45L490.07 308.19L514.32 303.55L538.58 298.54L562.83 293.17L587.09 287.42L611.34 281.30L635.60 274.82L635.60 275.60L611.34 282.05L587.09 288.13L562.83 293.84L538.58 299.18L514.32 304.16L490.07 308.77L465.81 313.02L441.56 316.89L417.30 320.40Z" fill="#f7a8c6"/><path d="M417.30 309.97L441.56 305.99L465.81 301.53L490.07 296.60L514.32 291.19L538.58 285.31L562.83 278.94L587.09 272.11L611.34 264.79L635.60 257.00L635.60 274.82L611.34 281.30L587.09 287.42L562.83 293.17L538.58 298.54L514.32 303.55L490.07 308.19L465.81 312.45L441.56 316.35L417.30 319.88Z" fill="#8453c6"/><path d="M417.30 308.96L441.56 304.94L465.81 300.43L490.07 295.44L514.32 289.97L538.58 284.02L562.83 277.58L587.09 270.66L611.34 263.27L635.60 255.38L635.60 257.00L611.34 264.79L587.09 272.11L562.83 278.94L538.58 285.31L514.32 291.19L490.07 296.60L465.81 301.53L441.56 305.99L417.30 309.97Z" fill="#a3cf7c"/><path d="M417.30 302.72L441.56 298.43L465.81 293.62L490.07 288.30L514.32 282.46L538.58 276.10L562.83 269.23L587.09 261.84L611.34 253.94L635.60 245.52L635.60 255.38L611.34 263.27L587.09 270.66L562.83 277.58L538.58 284.02L514.32 289.97L490.07 295.44L465.81 300.43L441.56 304.94L417.30 308.96Z" fill="#595959"/><path d="M417.3 355.6H635.6" stroke="#bfbfbf" stroke-width="0.800"/><path d="M417.30 355.6v2.500" stroke="#cfcfcf" stroke-width="0.800"/><path d="M441.56 355.6v2.500" stroke="#cfcfcf" stroke-width="0.800"/><path d="M465.81 355.6v2.500" stroke="#cfcfcf" stroke-width="0.800"/><path d="M490.07 355.6v2.500" stroke="#cfcfcf" stroke-width="0.800"/><path d="M514.32 355.6v2.500" stroke="#cfcfcf" stroke-width="0.800"/><path d="M538.58 355.6v2.500" stroke="#cfcfcf" stroke-width="0.800"/><path d="M562.83 355.6v2.500" stroke="#cfcfcf" stroke-width="0.800"/><path d="M587.09 355.6v2.500" stroke="#cfcfcf" stroke-width="0.800"/><path d="M611.34 355.6v2.500" stroke="#cfcfcf" stroke-width="0.800"/><path d="M635.60 355.6v2.500" stroke="#cfcfcf" stroke-width="0.800"/></svg>
<div class="t" style="left:406.10px;top:351.7px;font-size:8.5px;color:#555;letter-spacing:-0.331px;">0</div>
<div class="t" style="left:397.31px;top:329.9px;font-size:8.5px;color:#555;letter-spacing:-0.331px;">500</div>
<div class="t" style="left:392.91px;top:308.1px;font-size:8.5px;color:#555;letter-spacing:-0.331px;">1000</div>
<div class="t" style="left:392.91px;top:286.2px;font-size:8.5px;color:#555;letter-spacing:-0.331px;">1500</div>
<div class="t" style="left:392.91px;top:264.4px;font-size:8.5px;color:#555;letter-spacing:-0.331px;">2000</div>
<div class="t" style="left:392.91px;top:242.6px;font-size:8.5px;color:#555;letter-spacing:-0.331px;">2500</div>
<div class="t" style="left:392.91px;top:220.7px;font-size:8.5px;color:#555;letter-spacing:-0.331px;">3000</div>
<div class="t" style="left:408.05px;top:363.8px;font-size:9px;color:#444;letter-spacing:-0.381px;">2010</div>
<div class="t" style="left:432.31px;top:363.8px;font-size:9px;color:#444;letter-spacing:-0.214px;">2011</div>
<div class="t" style="left:456.56px;top:363.8px;font-size:9px;color:#444;letter-spacing:-0.381px;">2012</div>
<div class="t" style="left:480.82px;top:363.8px;font-size:9px;color:#444;letter-spacing:-0.381px;">2013</div>
<div class="t" style="left:505.07px;top:363.8px;font-size:9px;color:#444;letter-spacing:-0.381px;">2014</div>
<div class="t" style="left:529.33px;top:363.8px;font-size:9px;color:#444;letter-spacing:-0.381px;">2015</div>
<div class="t" style="left:553.58px;top:363.8px;font-size:9px;color:#444;letter-spacing:-0.381px;">2016</div>
<div class="t" style="left:577.84px;top:363.8px;font-size:9px;color:#444;letter-spacing:-0.381px;">2017</div>
<div class="t" style="left:602.09px;top:363.8px;font-size:9px;color:#444;letter-spacing:-0.381px;">2018</div>
<div class="t" style="left:626.35px;top:363.8px;font-size:9px;color:#444;letter-spacing:-0.381px;">2019</div>
<div class="a" style="left:655.3px;top:218.1px;width:5.8px;height:5.8px;background:#595959;"></div>
<div class="t" style="left:665.10px;top:215.8px;font-size:10.5px;color:#444;letter-spacing:-0.562px;">Южная Америка</div>
<div class="a" style="left:655.3px;top:235.77px;width:5.8px;height:5.8px;background:#70b945;"></div>
<div class="t" style="left:665.10px;top:233.4px;font-size:10.5px;color:#444;letter-spacing:-0.630px;">Океания</div>
<div class="a" style="left:655.3px;top:253.44px;width:5.8px;height:5.8px;background:#8453c6;"></div>
<div class="t" style="left:665.10px;top:251.1px;font-size:10.5px;color:#444;letter-spacing:-0.608px;">Северная Америка</div>
<div class="a" style="left:655.3px;top:271.11px;width:5.8px;height:5.8px;background:#ec407a;"></div>
<div class="t" style="left:665.10px;top:268.8px;font-size:10.5px;color:#444;letter-spacing:-0.523px;">Средний Восток</div>
<div class="a" style="left:655.3px;top:288.78px;width:5.8px;height:5.8px;background:#1e9fea;"></div>
<div class="t" style="left:665.10px;top:286.4px;font-size:10.5px;color:#444;letter-spacing:-0.714px;">Европа</div>
<div class="a" style="left:655.3px;top:306.45px;width:5.8px;height:5.8px;background:#fbc02d;"></div>
<div class="t" style="left:665.10px;top:304.1px;font-size:10.5px;color:#444;letter-spacing:-0.716px;">Евразия</div>
<div class="a" style="left:655.3px;top:324.12px;width:5.8px;height:5.8px;background:#a5a5a5;"></div>
<div class="t" style="left:665.10px;top:321.8px;font-size:10.5px;color:#444;letter-spacing:-0.572px;">Центральная Америка</div>
<div class="a" style="left:655.3px;top:341.79px;width:5.8px;height:5.8px;background:#c0311a;"></div>
<div class="t" style="left:665.10px;top:339.4px;font-size:10.5px;color:#444;letter-spacing:-0.772px;">Африка</div>
<div class="a" style="left:655.3px;top:359.46px;width:5.8px;height:5.8px;background:#f6a21e;"></div>
<div class="t" style="left:665.10px;top:357.1px;font-size:10.5px;color:#444;letter-spacing:-0.592px;">Азия</div>
<div class="a" style="left:78px;top:395px;width:451.500px;height:127px;border:1px solid #d9d9d9;border-bottom:none;background:#fff"></div>
<div class="t" style="left:81.30px;top:412.8px;font-size:11.5px;color:#a6a6a6;letter-spacing:-0.995px;">ГВт</div>
<div class="t" style="left:102.00px;top:411.7px;font-size:13.5px;color:#000;letter-spacing:-0.619px;">Возобновляемые генерирующие мощности по годам</div>
<svg style="left:0;top:0" width="1000" height="522" viewBox="0 0 1000 522" style="overflow:hidden"><path d="M103 436.2H523" stroke="#e2e2e2" stroke-width="0.800"/><path d="M103 463H523" stroke="#e2e2e2" stroke-width="0.800"/><path d="M103 489.8H523" stroke="#e2e2e2" stroke-width="0.800"/><path d="M103 516.8H523" stroke="#e2e2e2" stroke-width="0.800"/><defs><linearGradient id="bg" x1="0" y1="0" x2="0" y2="1"><stop offset="0" stop-color="#00b0f6"/><stop offset="1" stop-color="#2fb8f3"/></linearGradient></defs><rect x="193.6" y="520" width="28" height="2.0" fill="#0db0f5"/><rect x="235.6" y="513.2" width="28" height="8.8" fill="#0db0f5"/><rect x="278.3" y="506.4" width="28" height="15.6" fill="#0db0f5"/><rect x="320.3" y="498.2" width="28" height="23.8" fill="#0db0f5"/><rect x="362.3" y="490" width="28" height="32.0" fill="#0db0f5"/><rect x="404.4" y="480.8" width="28" height="41.2" fill="#0db0f5"/><rect x="446.4" y="471.1" width="28" height="50.9" fill="#0db0f5"/><rect x="488.7" y="455.6" width="28" height="66.4" fill="#0db0f5"/></svg>
<div class="t" style="left:78.01px;top:433.1px;font-size:8.5px;color:#555;letter-spacing:-0.331px;">3000</div>
<div class="t" style="left:78.01px;top:459.8px;font-size:8.5px;color:#555;letter-spacing:-0.331px;">2500</div>
<div class="t" style="left:78.01px;top:486.6px;font-size:8.5px;color:#555;letter-spacing:-0.331px;">2000</div>
<div class="t" style="left:78.01px;top:513.4px;font-size:8.5px;color:#555;letter-spacing:-0.331px;">1500</div>
<div class="t" style="left:543.00px;top:410.1px;font-size:9px;color:#707070;letter-spacing:-0.148px;">По данным</div>
<div class="t" style="left:543.00px;top:422.1px;font-size:9px;color:#707070;letter-spacing:-0.179px;">International Renewable Energy Agency</div>
<svg style="left:0;top:0" width="1000" height="551" viewBox="0 0 1000 551"><circle cx="555.4" cy="454" r="10.800" fill="#fff" stroke="#b3dbe9" stroke-width="1.600"/><path d="M547.9 450c2-3.500 6-4.500 9-3s2 3.500 0 4.500-2.500 2.500-1.500 4.500-1 3.500-3 1.500-1-3.500-2.500-4.500-2.500-2-2-3z" fill="#b3dbe9"/><path d="M557.9 452.5c2-1.500 4.500-.5 5.500 1.500s-1 5-3 5.500-2-1.500-2-3.500-1.500-2.500-.5-3.500z" fill="#b3dbe9"/><circle cx="586.7" cy="454" r="10.800" fill="#fff" stroke="#b3dbe9" stroke-width="1.600"/><path d="M579.2 450c2-3.500 6-4.500 9-3s2 3.500 0 4.500-2.500 2.500-1.500 4.500-1 3.500-3 1.500-1-3.500-2.500-4.500-2.500-2-2-3z" fill="#b3dbe9"/><path d="M589.2 452.5c2-1.500 4.500-.5 5.500 1.500s-1 5-3 5.500-2-1.500-2-3.500-1.500-2.500-.5-3.500z" fill="#b3dbe9"/><path d="M565 447.500c5 1 8 11 12.500 13.500" stroke="#b3dbe9" stroke-width="1.800" fill="none"/><path d="M565 460.500c5-1 8-11 12.500-13.500" stroke="#b3dbe9" stroke-width="1.800" fill="none"/></svg>
<div class="t" style="left:606.30px;top:439.3px;font-size:31px;color:#e0e0e0;letter-spacing:-0.449px;">IRENA</div>
<div class="t" style="left:544.00px;top:470.9px;font-size:9.5px;color:#bfe0ec;letter-spacing:-0.379px;">International Renewable Energy Agency</div>
<div class="a" style="left:795px;top:96px;width:205px;height:438px;background:#f1f1f1;"></div>
<div class="a" style="left:795px;top:96px;width:1px;height:438px;background:#dcdcdc;"></div>
<div class="a" style="left:968px;top:96px;width:1px;height:438px;background:#dcdcdc;"></div>
<div class="t" style="left:807.00px;top:104.0px;font-size:8.89px;color:#333;font-weight:bold;">Заливка</div>
<div class="a box" style="left:807px;top:115px;width:154px;height:17px;border-color:#e6e6e6"></div>
<div class="t" style="left:810.50px;top:119.7px;font-size:8.74px;color:#444;">Заливка цветом</div>
<svg style="left:949px;top:118px" width="11" height="11" viewBox="-5.00 -5.50 11 11" fill="none" stroke="#3a3a3a" stroke-width="1"><path d="M-2.1 -0.75 L0 1.35 L2.1 -0.75"/></svg>
<div class="a box" style="left:807px;top:138px;width:35px;height:17px;border-color:#dedede"></div>
<div class="a" style="left:809px;top:140px;width:22px;height:13px;background:#fff;border:1px solid #ececec"></div>
<svg style="left:832px;top:142px" width="11" height="11" viewBox="-5.00 -5.20 11 11" fill="none" stroke="#3a3a3a" stroke-width="1"><path d="M-2.1 -0.75 L0 1.35 L2.1 -0.75"/></svg>
<div class="a" style="left:807px;top:162.3px;width:153.5px;height:1px;background:#d8d8d8;"></div>
<div class="t" style="left:807.00px;top:170.3px;font-size:8.86px;color:#333;font-weight:bold;">Стиль границ</div>
<div class="a box" style="left:807px;top:187px;width:73px;height:18px;border-color:#e6e6e6"></div>
<svg style="left:810px;top:190px" width="60" height="12" viewBox="810 190 60 12"><path d="M815 196.100H862.500" stroke="#8f8f8f" stroke-width="1.300"/></svg>
<svg style="left:869px;top:191px" width="11" height="11" viewBox="-5.20 -5.20 11 11" fill="none" stroke="#3a3a3a" stroke-width="1"><path d="M-2.1 -0.75 L0 1.35 L2.1 -0.75"/></svg>
<div class="t" style="left:902.00px;top:191.9px;font-size:8.7px;color:#444;">Цвет</div>
<div class="a box" style="left:925px;top:187px;width:36px;height:18px;border-color:#e6e6e6"></div>
<div class="a" style="left:926px;top:189px;width:25px;height:15px;background:#000;"></div>
<svg style="left:950px;top:191px" width="11" height="11" viewBox="-5.50 -5.20 11 11" fill="none" stroke="#3a3a3a" stroke-width="1"><path d="M-2.1 -0.75 L0 1.35 L2.1 -0.75"/></svg>
<div class="t" style="left:807.00px;top:212.7px;font-size:8.69px;color:#555;">Выберите границы, к которым надо</div>
<div class="t" style="left:807.00px;top:223.9px;font-size:8.7px;color:#555;">применить выбранный стиль</div>
<svg style="left:805px;top:239px" width="21" height="21" viewBox="-10.00 -10.90 21 21" fill="none" stroke="#333" stroke-width="1.200"><rect x="-4.500" y="-4.500" width="9" height="9" stroke="#bbb" stroke-width=".8"/><path d="M-4.500 0h9M0 -4.500v9" stroke="#bbb" stroke-width=".8"/><rect x="-4.500" y="-4.500" width="9" height="9" stroke-width="1"/><path d="M-4.500 0h9M0 -4.500v9" stroke-width="1"/></svg>
<svg style="left:823px;top:239px" width="21" height="21" viewBox="-10.90 -10.90 21 21" fill="none" stroke="#333" stroke-width="1.200"><rect x="-4.500" y="-4.500" width="9" height="9" stroke="#c8c8c8" stroke-width=".8"/><path d="M-4.500 0h9M0 -4.500v9" stroke="#c8c8c8" stroke-width=".8"/></svg>
<svg style="left:843px;top:239px" width="21" height="21" viewBox="-10.50 -10.90 21 21" fill="none" stroke="#333" stroke-width="1.200"><rect x="-4.500" y="-4.500" width="9" height="9" stroke="#bbb" stroke-width=".8"/><path d="M-4.500 0h9M0 -4.500v9" stroke="#bbb" stroke-width=".8"/><path d="M-5 0h10M0 -5v10"/></svg>
<svg style="left:862px;top:239px" width="21" height="21" viewBox="-10.40 -10.90 21 21" fill="none" stroke="#333" stroke-width="1.200"><rect x="-4.500" y="-4.500" width="9" height="9" stroke="#bbb" stroke-width=".8"/><path d="M-4.500 0h9M0 -4.500v9" stroke="#bbb" stroke-width=".8"/><rect x="-4.500" y="-4.500" width="9" height="9"/></svg>
<svg style="left:881px;top:239px" width="21" height="21" viewBox="-10.40 -10.90 21 21" fill="none" stroke="#333" stroke-width="1.200"><rect x="-4.500" y="-4.500" width="9" height="9" stroke="#bbb" stroke-width=".8"/><path d="M-4.500 4.500L4.500 -4.500" stroke-width="1"/></svg>
<svg style="left:900px;top:239px" width="21" height="21" viewBox="-10.20 -10.90 21 21" fill="none" stroke="#333" stroke-width="1.200"><rect x="-4.500" y="-4.500" width="9" height="9" stroke="#bbb" stroke-width=".8"/><path d="M-4.500 -4.500L4.500 4.500" stroke-width="1"/></svg>
<svg style="left:805px;top:262px" width="21" height="21" viewBox="-10.00 -10.90 21 21" fill="none" stroke="#333" stroke-width="1.200"><rect x="-4.500" y="-4.500" width="9" height="9" stroke="#bbb" stroke-width=".8"/><path d="M-4.500 0h9M0 -4.500v9" stroke="#bbb" stroke-width=".8"/><path d="M-4.500 -5v10"/></svg>
<svg style="left:823px;top:262px" width="21" height="21" viewBox="-10.90 -10.90 21 21" fill="none" stroke="#333" stroke-width="1.200"><rect x="-4.500" y="-4.500" width="9" height="9" stroke="#bbb" stroke-width=".8"/><path d="M-4.500 0h9M0 -4.500v9" stroke="#bbb" stroke-width=".8"/><path d="M0 -5v10"/></svg>
<svg style="left:843px;top:262px" width="21" height="21" viewBox="-10.50 -10.90 21 21" fill="none" stroke="#333" stroke-width="1.200"><rect x="-4.500" y="-4.500" width="9" height="9" stroke="#bbb" stroke-width=".8"/><path d="M-4.500 0h9M0 -4.500v9" stroke="#bbb" stroke-width=".8"/><path d="M4.500 -5v10"/></svg>
<svg style="left:862px;top:262px" width="21" height="21" viewBox="-10.40 -10.90 21 21" fill="none" stroke="#333" stroke-width="1.200"><rect x="-4.500" y="-4.500" width="9" height="9" stroke="#bbb" stroke-width=".8"/><path d="M-4.500 0h9M0 -4.500v9" stroke="#bbb" stroke-width=".8"/><path d="M-5 -4.500h10"/></svg>
<svg style="left:881px;top:262px" width="21" height="21" viewBox="-10.40 -10.90 21 21" fill="none" stroke="#333" stroke-width="1.200"><rect x="-4.500" y="-4.500" width="9" height="9" stroke="#bbb" stroke-width=".8"/><path d="M-4.500 0h9M0 -4.500v9" stroke="#bbb" stroke-width=".8"/><path d="M-5 0h10"/></svg>
<svg style="left:900px;top:262px" width="21" height="21" viewBox="-10.20 -10.90 21 21" fill="none" stroke="#333" stroke-width="1.200"><rect x="-4.500" y="-4.500" width="9" height="9" stroke="#bbb" stroke-width=".8"/><path d="M-4.500 0h9M0 -4.500v9" stroke="#bbb" stroke-width=".8"/><path d="M-5 4.500h10"/></svg>
<div class="a" style="left:807px;top:287px;width:153.5px;height:1px;background:#d8d8d8;"></div>
<div class="t" style="left:807.00px;top:295.0px;font-size:8.75px;color:#333;font-weight:bold;">Отступ</div>
<div class="a box" style="left:807px;top:306px;width:47px;height:17px;border-color:#e6e6e6"></div>
<div class="t" style="left:834.08px;top:310.7px;font-size:8.7px;color:#444;">0</div>
<svg style="left:842.300px;top:305px" width="10" height="20" viewBox="-5 -10 10 20" fill="none" stroke="#555" stroke-width="1"><path d="M-2 -4.200L0 -6.200L2 -4.200M-2 3L0 5L2 3"/></svg>
<div class="t" style="left:807.00px;top:337.1px;font-size:8.82px;color:#333;font-weight:bold;">Ориентация текста</div>
<div class="t" style="left:807.00px;top:358.8px;font-size:8.7px;color:#555;">Угол</div>
<div class="a box" style="left:831px;top:355px;width:47px;height:17px;border-color:#e6e6e6"></div>
<div class="t" style="left:851.63px;top:359.0px;font-size:8.7px;color:#444;">0 °</div>
<svg style="left:866.500px;top:353.300px" width="10" height="20" viewBox="-5 -10 10 20" fill="none" stroke="#555" stroke-width="1"><path d="M-2 -4.200L0 -6.200L2 -4.200M-2 3L0 5L2 3"/></svg>
<div class="t" style="left:807.00px;top:385.3px;font-size:8.81px;color:#333;font-weight:bold;">Отображение</div>
<div class="a" style="left:807px;top:403px;width:11px;height:11px;background:#fff;border:1px solid #d4d4d4;border-radius:1.500px"></div>
<div class="t" style="left:824.60px;top:404.0px;font-size:8.65px;color:#444;">Перенос текста</div>
<div class="a" style="left:807px;top:421px;width:11px;height:11px;background:#fff;border:1px solid #d4d4d4;border-radius:1.500px"></div>
<div class="t" style="left:824.60px;top:422.0px;font-size:8.69px;color:#444;">Автоподбор ширины</div>
<div class="a" style="left:807px;top:439px;width:153.5px;height:1px;background:#d8d8d8;"></div>
<svg style="left:805px;top:443px" width="21" height="21" viewBox="-10.00 -10.90 21 21" fill="none" stroke="#444" stroke-width="1"><rect x="-5" y="-5" width="9" height="9"/><path d="M-5 -2.500h9" stroke-width="1.400"/><path d="M-5 .5h4M-5 2.500h4" stroke-width=".8"/><rect x="-0.500" y="-0.500" width="5.500" height="5.500" fill="#f1f1f1"/><path d="M1 1.300l2 1-2 1M3 3.800h1.500" stroke-width=".7"/></svg>
<div class="t" style="left:826.10px;top:449.8px;font-size:8.65px;color:#444;">Условное форматирование</div>
<svg style="left:938px;top:449px" width="11" height="11" viewBox="-5.30 -5.30 11 11" fill="none" stroke="#3a3a3a" stroke-width="1"><path d="M-2.1 -0.75 L0 1.35 L2.1 -0.75"/></svg>
<div class="a" style="left:969px;top:109.5px;width:31px;height:23.3px;background:#7d858c;"></div>
<svg style="left:974px;top:111px" width="21" height="21" viewBox="-10.50 -10.20 21 21" fill="none" stroke="#f4f4f4" stroke-width="1"><rect x="-6" y="-5" width="12" height="10" rx="1" stroke-width="1.100"/><rect x="-4" y="-2.500" width="8" height="5" stroke-width=".8"/><path d="M-1.300 -2.500v5M1.300 -2.500v5" stroke-width=".7"/></svg>
<svg style="left:974px;top:141px" width="21" height="21" viewBox="-10.50 -10.30 21 21" fill="none" stroke="#9e9e9e" stroke-width="1"><rect x="-5.500" y="-4" width="11" height="8"/><path d="M-5.500 -1.300h11M-5.500 1.300h11M-1.800 -4v8M1.800 -4v8" stroke-width=".8"/></svg>
<svg style="left:974px;top:171px" width="21" height="21" viewBox="-10.50 -10.60 21 21" fill="none" stroke="#9e9e9e" stroke-width="1"><rect x="-5" y="-5" width="6.500" height="6.500"/><circle cx="1.500" cy="1.500" r="3.800" fill="#f1f1f1"/></svg>
<svg style="left:974px;top:201px" width="21" height="21" viewBox="-10.50 -10.30 21 21" fill="none" stroke="#9e9e9e" stroke-width="1"><rect x="-5" y="-5" width="10" height="10"/><path d="M-5 3l3-3.500 2.500 2.500 2-2 2.500 2.500" stroke-width=".8"/><circle cx="-2.300" cy="-2.300" r=".8"/></svg>
<svg style="left:974px;top:231px" width="21" height="21" viewBox="-10.50 -10.80 21 21" fill="none" stroke="#9e9e9e" stroke-width="1"><rect x="-5" y="2" width="2.500" height="3"/><rect x="-1.300" y="-1" width="2.500" height="6"/><rect x="2.500" y="-5" width="2.500" height="10"/></svg>
<div class="t" style="left:979.500px;top:264.500px;font-size:13px;color:#9e9e9e;font-weight:bold">¶</div>
<div class="t" style="left:978px;top:294px;font-size:11px;color:#a6a6a6">Ta</div>
<svg style="left:974px;top:297px" width="21" height="21" viewBox="-10.50 -10.00 21 21" fill="none" stroke="#a6a6a6" stroke-width="1"><path d="M-4.500 1.500q4.500-3 9 0" stroke-width=".8"/></svg>
<svg style="left:974px;top:321px" width="21" height="21" viewBox="-10.50 -10.40 21 21" fill="none" stroke="#a6a6a6" stroke-width="1"><rect x="-5" y="-5" width="3" height="3" stroke-width=".8"/><rect x="-5" y="0" width="3" height="5" stroke-width=".8"/><path d="M0 -4.500h5v3M0 4h3.500l1.500-2" stroke-width=".8" stroke-dasharray="2 1"/></svg>
<svg style="left:974px;top:352px" width="21" height="21" viewBox="-10.50 -10.00 21 21" fill="none" stroke="#a6a6a6" stroke-width="1"><rect x="-5" y="-5" width="9" height="7" fill="#c4c4c4" stroke="none"/><path d="M-5 4h5M1 2.500h5M3.500 2.500v4" stroke-width="1.200"/></svg>
<div class="a" style="left:0px;top:533.3px;width:1000px;height:17.7px;background:#f1f1f1;border-top:1px solid #dcdcdc"></div>
<svg style="left:12px;top:538.500px" width="8" height="9" viewBox="0 0 8 9"><path d="M6.500 0.500L1 4.500L6.500 8.500z" fill="#9a9a9a"/></svg>
<svg style="left:32px;top:538.500px" width="8" height="9" viewBox="0 0 8 9"><path d="M1 0.500L6.500 4.500L1 8.500z" fill="#111"/></svg>
<div class="a" style="left:54.5px;top:534px;width:1px;height:17px;background:#d4d4d4;"></div>
<svg style="left:62.500px;top:537.500px" width="11" height="11" viewBox="0 0 11 11" stroke="#333" stroke-width="1" fill="none"><path d="M5.500 1v9M1 5.500h9"/></svg>
<svg style="left:82px;top:538px" width="10" height="10" viewBox="0 0 10 10" stroke="#444" stroke-width="1" fill="none"><path d="M.5 1.500h9M.5 4h9M.5 6.500h9M.5 9h9"/></svg>
<div class="a" style="left:101px;top:534px;width:1px;height:17px;background:#d4d4d4;"></div>
<div class="a" style="left:152.5px;top:533.3px;width:54px;height:17.7px;background:#fff;"></div>
<div class="a" style="left:152.5px;top:533.3px;width:54px;height:3px;background:#136b4b;"></div>
<div class="t" style="left:111.30px;top:538.7px;font-size:8.72px;color:#8c8c8c;">Данные</div>
<div class="t" style="left:160.70px;top:538.7px;font-size:8.84px;color:#222;font-weight:bold;">Графики</div>
<div class="t" style="left:219.50px;top:538.7px;font-size:8.7px;color:#8c8c8c;">Генерирующие мощности</div>
<div class="t" style="left:348.00px;top:538.7px;font-size:8.72px;color:#8c8c8c;">Прирост по годам</div>
<div class="t" style="left:445.00px;top:538.7px;font-size:8.72px;color:#8c8c8c;">Доли по технологиям в год</div>
<div class="t" style="left:579.50px;top:538.8px;font-size:8.62px;color:#8c8c8c;">Генерация по годам</div>
<div class="t" style="left:681.50px;top:538.7px;font-size:8.7px;color:#8c8c8c;">По районам</div>
<div class="a" style="left:336.5px;top:534px;width:1px;height:17px;background:#d4d4d4;"></div>
<div class="a" style="left:431px;top:534px;width:1px;height:17px;background:#d4d4d4;"></div>
<div class="a" style="left:567px;top:534px;width:1px;height:17px;background:#d4d4d4;"></div>
<div class="a" style="left:671.5px;top:534px;width:1px;height:17px;background:#d4d4d4;"></div>
<div class="a" style="left:730px;top:534px;width:1px;height:17px;background:#d4d4d4;"></div>
<div class="a" style="left:870.5px;top:542.5px;width:11px;height:1px;background:#444;"></div>
<div class="t" style="left:889.00px;top:538.7px;font-size:8.76px;color:#333;font-weight:bold;">Масштаб 90%</div>
<svg style="left:954.500px;top:537.500px" width="11" height="11" viewBox="0 0 11 11" stroke="#333" stroke-width="1" fill="none"><path d="M5.500 0.500v10M0.500 5.500h10"/></svg>
<div class="a" style="left:0px;top:96px;width:32px;height:1px;background:#e2e2e2;"></div>
<div class="a" style="left:795px;top:96px;width:205px;height:1px;background:#e2e2e2;"></div>
</div></body></html>
